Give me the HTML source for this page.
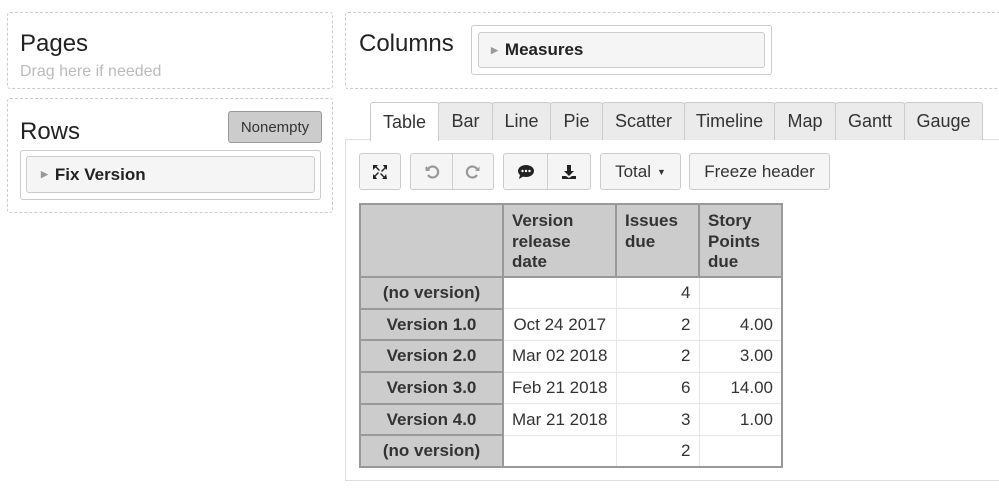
<!DOCTYPE html>
<html><head><style>
body{margin:0;width:999px;height:495px;background:#fff;font-family:"Liberation Sans",Arial,sans-serif;color:#333;position:relative;overflow:hidden}
.a{position:absolute;box-sizing:border-box}
.dash{border:1px dashed #ccc;border-radius:3px}
.btn{position:absolute;box-sizing:border-box;border:1px solid #ccc;border-radius:3px;background:#f5f5f5;font-size:17px;color:#333;display:flex;align-items:center;justify-content:center}
.tab{position:absolute;top:102px;height:38px;box-sizing:border-box;border:1px solid #ccc;border-bottom:none;background:#ebebeb;font-size:18px;display:flex;align-items:center;justify-content:center;border-radius:3px 3px 0 0}
table{position:absolute;left:359px;top:203px;border-collapse:collapse;font-size:17px;border:2px solid #999}
td,th{box-sizing:border-box;padding:0 8px;height:31.7px}
th{background:#ccc;border:2px solid #999;font-weight:bold;text-align:center}
thead th{text-align:left;vertical-align:top;height:73px;padding-top:6px;line-height:20.5px}
td{border:1px solid #e6e6e6;text-align:right}
tr td:last-child{border-right:2px solid #999}
tr:last-child td{border-bottom:2px solid #999}
</style></head><body>
<div class="a dash" style="left:7px;top:12px;width:326px;height:77px"></div>
<div class="a" style="left:20px;top:30px;font-size:24px;color:#222">Pages</div>
<div class="a" style="left:20px;top:63px;font-size:16px;color:#bbb">Drag here if needed</div>
<div class="a dash" style="left:7px;top:98px;width:326px;height:115px"></div>
<div class="a" style="left:20px;top:118px;font-size:24px;color:#222">Rows</div>
<div class="btn" style="left:228px;top:111px;width:94px;height:32px;background:#ccc;border-color:#999;font-size:15px">Nonempty</div>
<div class="a" style="left:20px;top:150px;width:301px;height:50px;border:1px solid #ccc;border-radius:3px"></div>
<div class="btn" style="left:26px;top:156px;width:289px;height:37px;justify-content:flex-start;padding-left:14px;font-weight:bold;color:#222"><span style="font-size:9px;color:#999;margin-right:7px">▶</span>Fix Version</div>
<div class="a dash" style="left:345px;top:12px;width:660px;height:77px"></div>
<div class="a" style="left:359px;top:30px;font-size:24px;color:#222">Columns</div>
<div class="a" style="left:471px;top:25px;width:301px;height:50px;border:1px solid #ccc;border-radius:3px"></div>
<div class="btn" style="left:478px;top:32px;width:287px;height:36px;justify-content:flex-start;padding-left:12px;font-weight:bold;color:#222"><span style="font-size:9px;color:#999;margin-right:7px">▶</span>Measures</div>
<div class="a" style="left:345px;top:139px;width:700px;height:342px;border:1px solid #ddd"></div>
<div class="tab" style="left:370px;width:69px;background:#fff;height:39px">Table</div>
<div class="tab" style="left:438px;width:55px">Bar</div>
<div class="tab" style="left:492px;width:59px">Line</div>
<div class="tab" style="left:550px;width:53px">Pie</div>
<div class="tab" style="left:602px;width:83px">Scatter</div>
<div class="tab" style="left:684px;width:91px">Timeline</div>
<div class="tab" style="left:774px;width:62px">Map</div>
<div class="tab" style="left:835px;width:70px">Gantt</div>
<div class="tab" style="left:904px;width:79px">Gauge</div>
<div class="btn" style="left:359px;top:153px;width:42px;height:37px"><svg width="16" height="16" viewBox="0 0 16 16" fill="#222"><path d="M1 1h5l-1.5 1.5 3.5 3.5-1 1-3.5-3.5L1 6zM15 1v5l-1.5-1.5L10 8 9 7l3.5-3.5L11 1zM1 15v-5l1.5 1.5L6 8l1 1-3.5 3.5L5 15zM15 15h-5l1.5-1.5L8 10l1-1 3.5 3.5L14 10z"/></svg></div>
<div class="btn" style="left:410px;top:153px;width:43px;height:37px;border-radius:3px 0 0 3px"><svg width="16" height="16" viewBox="0 0 16 16" fill="none" stroke="#999" stroke-width="2.2"><path d="M4 5a5.5 5.5 0 1 1 0 6"/><path d="M2 2v4h4" stroke-width="0" fill="#999"/><path d="M1.5 2.5l0 4.5h4.5z" fill="#999" stroke="none"/></svg></div>
<div class="btn" style="left:452px;top:153px;width:42px;height:37px;border-radius:0 3px 3px 0"><svg width="16" height="16" viewBox="0 0 16 16" fill="none" stroke="#999" stroke-width="2.2"><path d="M12 5a5.5 5.5 0 1 0 0 6"/><path d="M14.5 2.5l0 4.5h-4.5z" fill="#999" stroke="none"/></svg></div>
<div class="btn" style="left:503px;top:153px;width:45px;height:37px;border-radius:3px 0 0 3px"><svg width="18" height="16" viewBox="0 0 18 16"><ellipse cx="9" cy="7" rx="8" ry="6" fill="#222"/><path d="M3 11l-1 4 5-3z" fill="#222"/><circle cx="5.5" cy="7" r="1.2" fill="#fff"/><circle cx="9" cy="7" r="1.2" fill="#fff"/><circle cx="12.5" cy="7" r="1.2" fill="#fff"/></svg></div>
<div class="btn" style="left:547px;top:153px;width:44px;height:37px;border-radius:0 3px 3px 0"><svg width="16" height="16" viewBox="0 0 16 16" fill="#222"><path d="M6 1h4v6h3l-5 5-5-5h3z"/><path d="M1 12h4l3 2 3-2h4v3H1z"/></svg></div>
<div class="btn" style="left:600px;top:153px;width:81px;height:37px">Total <span style="font-size:9px;margin-left:6px">▼</span></div>
<div class="btn" style="left:689px;top:153px;width:141px;height:37px">Freeze header</div>
<table>
<thead><tr><th style="width:143px"></th><th style="width:113px">Version<br>release<br>date</th><th style="width:83px">Issues<br>due</th><th style="width:83px">Story<br>Points<br>due</th></tr></thead>
<tbody>
<tr><th>(no version)</th><td></td><td>4</td><td></td></tr>
<tr><th>Version 1.0</th><td style="text-align:center">Oct 24 2017</td><td>2</td><td>4.00</td></tr>
<tr><th>Version 2.0</th><td style="text-align:center">Mar 02 2018</td><td>2</td><td>3.00</td></tr>
<tr><th>Version 3.0</th><td style="text-align:center">Feb 21 2018</td><td>6</td><td>14.00</td></tr>
<tr><th>Version 4.0</th><td style="text-align:center">Mar 21 2018</td><td>3</td><td>1.00</td></tr>
<tr><th>(no version)</th><td></td><td>2</td><td></td></tr>
</tbody></table>
</body></html>
